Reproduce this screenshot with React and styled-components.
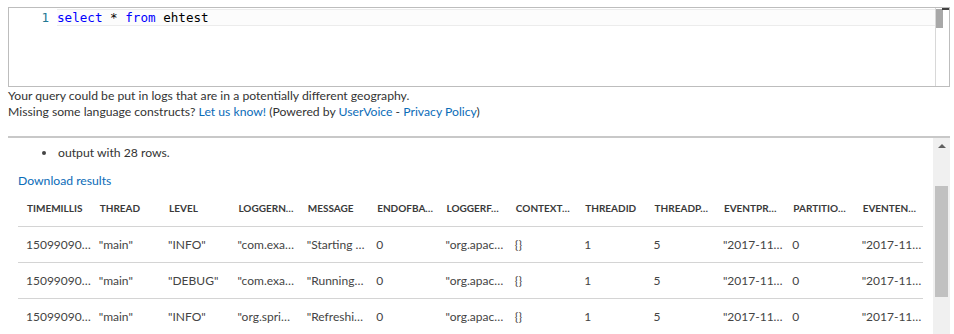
import React from "react";
import styled, { createGlobalStyle } from "styled-components";

const Global = createGlobalStyle`
  html, body { margin: 0; padding: 0; background: #fff; }
  body { font-family: "Lato", "Open Sans", sans-serif; color: #333; }
`;

const Page = styled.div`
  width: 954px;
  height: 334px;
  box-sizing: border-box;
  padding: 7px 4px 0 8px;
  overflow: hidden;
  display: flex;
  flex-direction: column;
`;

const Editor = styled.div`
  height: 80px;
  box-sizing: border-box;
  border: 1px solid #bdbdbd;
  display: flex;
`;

const EditorBody = styled.div`
  flex: 1;
  padding-top: 1px;
`;

const CodeLine = styled.div`
  display: flex;
  height: 17px;
  align-items: center;
`;

const LineNo = styled.span`
  width: 48px;
  padding-right: 8px;
  box-sizing: border-box;
  text-align: right;
  font-family: "DejaVu Sans Mono", monospace;
  font-size: 12.6px;
  color: #237893;
`;

const CodeText = styled.div`
  flex: 1;
  height: 100%;
  box-sizing: border-box;
  border-top: 1px solid #ececec;
  border-bottom: 1px solid #ececec;
  background: #fcfcfc;
  font-family: "DejaVu Sans Mono", monospace;
  font-size: 12.6px;
  line-height: 15px;
  color: #000;
  white-space: pre;
`;

const Kw = styled.span`
  color: #0000ff;
`;

const EditorScroll = styled.div`
  width: 13px;
  border-left: 1px solid #d8d8d8;
  position: relative;
  display: flex;
  flex-direction: column;
`;

const EditorThumb = styled.div`
  width: 7px;
  height: 19px;
  margin-top: 1px;
  background: #a8a8a8;
`;

const OverviewMark = styled.div`
  position: absolute;
  top: 0;
  right: 0;
  width: 7px;
  height: 2px;
  background: #424242;
`;

const Notes = styled.div`
  margin-top: 1px;
  font-size: 12.2px;
  line-height: 16px;
  color: #333;
`;

const Link = styled.a`
  color: #0b6cb8;
  text-decoration: none;
`;

const Results = styled.div`
  margin-top: 16px;
  border-top: 2px solid #c8c8c8;
  flex: 1;
  display: flex;
  min-height: 0;
`;

const ResultsBody = styled.div`
  flex: 1;
  padding: 7px 10px 0 10px;
  overflow: hidden;
  font-size: 12.2px;
  line-height: 16px;
`;

const BulletRow = styled.div`
  display: flex;
  align-items: center;
  padding-left: 24px;
  color: #333;
`;

const Dot = styled.span`
  width: 4px;
  height: 4px;
  border-radius: 50%;
  background: #444;
  margin-right: 12px;
`;

const Download = styled(Link)`
  display: block;
  margin-top: 12px;
`;

const Table = styled.div`
  width: 905px;
  display: grid;
  grid-template-columns: repeat(13, 1fr);
`;

const HeadCell = styled.div`
  height: 38px;
  display: flex;
  align-items: center;
  padding: 1px 0 0 9px;
  box-sizing: border-box;
  border-bottom: 1px solid #d4d4d4;
  font-size: 10px;
  font-weight: 700;
  color: #3a3a3a;
  white-space: nowrap;
`;

const Cell = styled.div`
  height: 36px;
  display: flex;
  align-items: center;
  padding: 1px 0 0 8px;
  box-sizing: border-box;
  border-bottom: 1px solid #d4d4d4;
  font-size: 12px;
  color: #444;
  white-space: nowrap;
`;

const VScroll = styled.div`
  width: 17px;
  background: #f0f0f0;
  display: flex;
  flex-direction: column;
  align-items: center;
`;

const Arrow = styled.div`
  margin-top: 6px;
  width: 0;
  height: 0;
  border-left: 4px solid transparent;
  border-right: 4px solid transparent;
  border-bottom: 4px solid #606060;
`;

const Thumb = styled.div`
  margin-top: 38px;
  width: 13px;
  height: 111px;
  background: #c1c1c1;
`;

const headers = [
  "TIMEMILLIS", "THREAD", "LEVEL", "LOGGERN…", "MESSAGE", "ENDOFBA…",
  "LOGGERF…", "CONTEXT…", "THREADID", "THREADP…", "EVENTPR…",
  "PARTITIO…", "EVENTEN…",
];

const rows = [
  ["15099090…", "\"main\"", "\"INFO\"", "\"com.exa…", "\"Starting …", "0", "\"org.apac…", "{}", "1", "5", "\"2017-11…", "0", "\"2017-11…"],
  ["15099090…", "\"main\"", "\"DEBUG\"", "\"com.exa…", "\"Running…", "0", "\"org.apac…", "{}", "1", "5", "\"2017-11…", "0", "\"2017-11…"],
  ["15099090…", "\"main\"", "\"INFO\"", "\"org.spri…", "\"Refreshi…", "0", "\"org.apac…", "{}", "1", "5", "\"2017-11…", "0", "\"2017-11…"],
];

export default function App() {
  return (
    <>
      <Global />
      <Page>
        <Editor>
          <EditorBody>
            <CodeLine>
              <LineNo>1</LineNo>
              <CodeText>
                <Kw>select</Kw> * <Kw>from</Kw> ehtest
              </CodeText>
            </CodeLine>
          </EditorBody>
          <EditorScroll>
            <EditorThumb />
            <OverviewMark />
          </EditorScroll>
        </Editor>
        <Notes>
          <div>Your query could be put in logs that are in a potentially different geography.</div>
          <div>
            Missing some language constructs? <Link href="#">Let us know!</Link> (Powered by{" "}
            <Link href="#">UserVoice</Link> - <Link href="#">Privacy Policy</Link>)
          </div>
        </Notes>
        <Results>
          <ResultsBody>
            <BulletRow>
              <Dot />
              output with 28 rows.
            </BulletRow>
            <Download href="#">Download results</Download>
            <Table>
              {headers.map((h) => (
                <HeadCell key={h}>{h}</HeadCell>
              ))}
              {rows.map((r, i) =>
                r.map((c, j) => <Cell key={i + "-" + j}>{c}</Cell>)
              )}
            </Table>
          </ResultsBody>
          <VScroll>
            <Arrow />
            <Thumb />
          </VScroll>
        </Results>
      </Page>
    </>
  );
}
